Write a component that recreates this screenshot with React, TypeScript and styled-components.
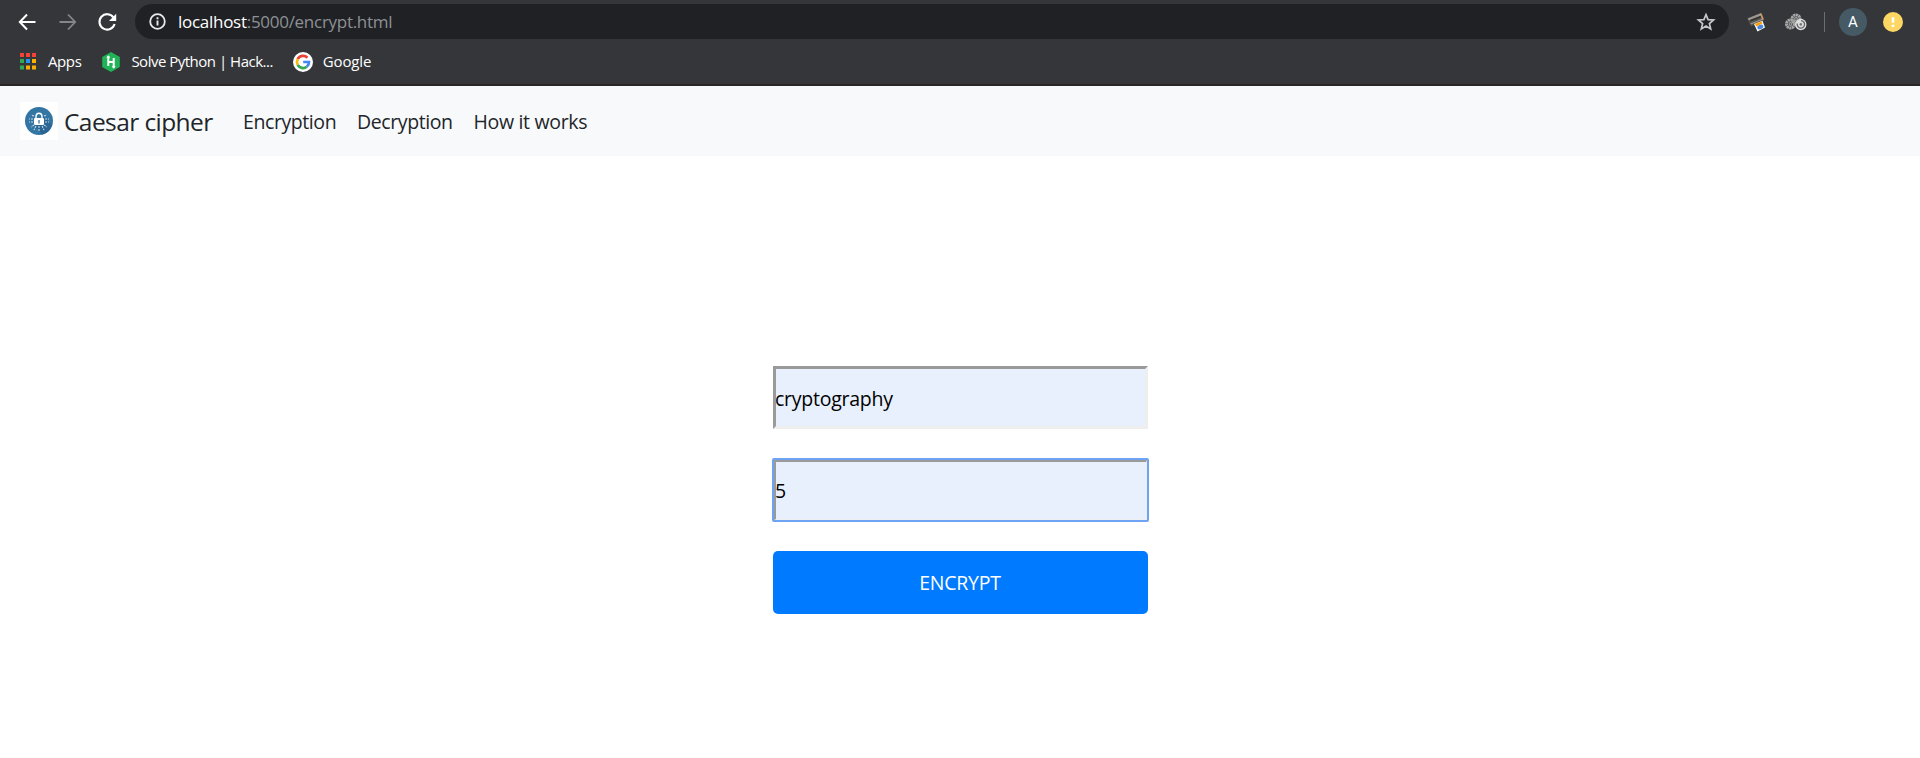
import React from 'react';
import styled, { createGlobalStyle } from 'styled-components';

const Global = createGlobalStyle`
  * { box-sizing: border-box; }
  html, body { margin: 0; background: #fff; overflow: hidden; }
  body { font-family: "Open Sans", "Noto Sans", sans-serif; color: #212529; }
`;

const Page = styled.div`
  display: flex;
  flex-direction: column;
  height: 758px;
`;

const Chrome = styled.header`
  height: 86px;
  background: #35363a;
  border-bottom: 2px solid #292827;
  color: #fff;
`;

const Toolbar = styled.div`
  display: flex;
  align-items: center;
  height: 43px;
  padding: 0 10px 0 17px;
`;

const NavIcon = styled.svg`
  width: 20px;
  height: 20px;
  margin-right: 20px;
  flex: none;
`;

const AddressBar = styled.div`
  display: flex;
  align-items: center;
  width: 1594px;
  height: 35px;
  margin-left: -2px;
  padding: 0 13px 0 14px;
  border-radius: 18px;
  background: #202124;
`;

const InfoIcon = styled.svg`
  width: 17px;
  height: 17px;
  margin-right: 12px;
`;

const Url = styled.div`
  flex: 1;
  font-size: 17px;
  line-height: 24px;
  letter-spacing: -0.28px;
  color: #8d9196;
  white-space: nowrap;
`;

const Host = styled.span`
  color: #fff;
`;

const StarIcon = styled.svg`
  width: 20px;
  height: 20px;
`;

const Extensions = styled.div`
  display: flex;
  align-items: center;
  margin-left: 18px;
`;

const ExtIcon = styled.svg<{ $w: number; $gap: number }>`
  width: ${(p) => p.$w}px;
  height: 20px;
  margin-right: ${(p) => p.$gap}px;
`;

const Divider = styled.div`
  width: 1px;
  height: 20px;
  margin-right: 14px;
  background: #6d6e71;
`;

const Avatar = styled.div`
  width: 28px;
  height: 28px;
  margin-right: 16px;
  border-radius: 50%;
  background: #455a64;
  font: 15px/28px Roboto, sans-serif;
  text-align: center;
`;

const Alert = styled.svg`
  width: 20px;
  height: 20px;
`;

const Bookmarks = styled.nav`
  display: flex;
  align-items: center;
  height: 37px;
  padding-left: 19px;
`;

const Bookmark = styled.div<{ $gap: number; $space: number; $track: number }>`
  display: flex;
  align-items: center;
  gap: ${(p) => p.$space}px;
  margin-right: ${(p) => p.$gap}px;
  font-size: 15px;
  line-height: 20px;
  letter-spacing: ${(p) => p.$track}px;
  white-space: nowrap;
`;

const BookmarkLabel = styled.span`
  padding-bottom: 2px;
`;

const SiteNav = styled.nav`
  display: flex;
  align-items: center;
  height: 70px;
  padding-left: 20px;
  background: #f8f9fb;
`;

const Logo = styled.svg`
  width: 38px;
  height: 38px;
  margin-right: 6px;
`;

const Brand = styled.a`
  width: 179px;
  font-size: 24.5px;
  line-height: 38px;
  letter-spacing: -0.58px;
  padding-top: 2px;
  white-space: nowrap;
`;

const NavLink = styled.a<{ $w: number; $track: number }>`
  width: ${(p) => p.$w}px;
  padding-top: 2px;
  font-size: 19.5px;
  line-height: 30px;
  letter-spacing: ${(p) => p.$track}px;
  white-space: nowrap;
`;

const Form = styled.form`
  display: flex;
  flex-direction: column;
  align-items: center;
  padding-top: 210px;
`;

const Field = styled.input`
  display: block;
  width: 375px;
  height: 63px;
  margin: 0 0 29px 1px;
  padding: 2px 0 0;
  border: 3px solid;
  border-color: #9a9a9a #eee #eee #9a9a9a;
  border-radius: 0;
  outline: none;
  background: #e8f0fe;
  color: #000;
  font: 19.5px "Open Sans", sans-serif;
  letter-spacing: -0.25px;
  text-indent: -1px;
`;

const FocusRing = styled.div`
  width: 377px;
  height: 64px;
  margin: 0 0 29px 1px;
  border: 2px solid #6ea2f3;
  border-radius: 2px;
`;

const FocusedField = styled(Field)`
  width: 373px;
  height: 60px;
  margin: 0;
  padding: 0;
  border-width: 2px 1px 1px 2px;
`;

const Submit = styled.button`
  width: 375px;
  height: 63px;
  margin-left: 1px;
  padding: 0 1px 0 0;
  border: 0;
  border-radius: 5px;
  background: #007bff;
  color: #fff;
  font: 19.5px "Open Sans", sans-serif;
  letter-spacing: -0.25px;
`;

const appColors = ['#f44336', '#f44336', '#f44336', '#34a853', '#2196f3', '#fbaf00', '#34a853', '#fbaf00', '#fbaf00'];

export default function App() {
  return (
    <Page>
      <Global />
      <Chrome>
        <Toolbar>
          <NavIcon viewBox="0 0 20 20" fill="none" stroke="#fff" strokeWidth="2">
            <path d="M18.5 10H3.5M10 2.5L2.8 10L10 17.5" />
          </NavIcon>
          <NavIcon viewBox="0 0 20 20" fill="none" stroke="#85868a" strokeWidth="1.8">
            <path d="M2.5 10H17.5M11 2.5L18.2 10L11 17.5" />
          </NavIcon>
          <NavIcon viewBox="0 0 20 20">
            <path d="M16.4 5.3A7.7 7.7 0 1 0 17.6 12" fill="none" stroke="#fff" strokeWidth="2.1" />
            <path d="M19.2 1.8V9H12Z" fill="#fff" />
          </NavIcon>
          <AddressBar>
            <InfoIcon viewBox="0 0 17 17">
              <circle cx="8.5" cy="8.5" r="7.3" fill="none" stroke="#e8eaed" strokeWidth="1.8" />
              <path d="M8.5 7.6V12.6M8.5 4.3V6.2" stroke="#e8eaed" strokeWidth="1.9" />
            </InfoIcon>
            <Url><Host>localhost</Host>:5000/encrypt.html</Url>
            <StarIcon viewBox="0 0 20 20" fill="none" stroke="#c6c7c9" strokeWidth="1.7">
              <path d="M10 2.6L12.1 7.6L17.6 8L13.4 11.6L14.7 17L10 14.1L5.3 17L6.6 11.6L2.4 8L7.9 7.6Z" />
            </StarIcon>
          </AddressBar>
          <Extensions>
            <ExtIcon $w={20} $gap={18} viewBox="0 0 20 20">
              <path d="M.5 6.5L14 1L17 8.5L4 14.5Z" fill="#55524f" />
              <path d="M.5 6.5L14 1L15 3.5L2 8.5Z" fill="#9c9790" />
              <path d="M3 8.8L14 4.6" stroke="#343230" strokeWidth="1.6" />
              <path d="M3.6 12L15.5 7.2" stroke="#a09a93" strokeWidth="1.2" />
              <path d="M13 2L14.6 1.4L17 7.2L15.2 8Z" fill="#c39766" />
              <path d="M7 12L15.5 8.8L18 15.5L10.5 19.5Z" fill="#fff" />
              <path d="M8 12L14.5 9.4L15.5 11.6L9.2 14.6Z" fill="#ffa000" />
              <ellipse cx="13.3" cy="15" rx="3.1" ry="2.1" transform="rotate(-22 13.3 15)" fill="#4d87df" />
            </ExtIcon>
            <ExtIcon $w={22} $gap={17} viewBox="0 0 22 20">
              <g fill="none" stroke="#a6a6a6">
                <circle cx="5.5" cy="12" r="4" strokeWidth="3" strokeDasharray="2.2 .4" />
                <circle cx="5.5" cy="12" r="1.4" strokeWidth="1.2" />
                <circle cx="11" cy="7" r="4" strokeWidth="3" strokeDasharray="2.2 .4" />
                <circle cx="11" cy="7" r="1.4" strokeWidth="1.2" />
              </g>
              <circle cx="15.8" cy="12.5" r="5.7" fill="#dedede" />
              <path d="M12.3 11.5A3.7 3.7 0 1 0 16 8.7" fill="none" stroke="#666" strokeWidth="1.3" />
              <circle cx="15.8" cy="12.4" r="1.3" fill="#777" />
            </ExtIcon>
            <Divider />
            <Avatar>A</Avatar>
            <Alert viewBox="0 0 20 20">
              <circle cx="10" cy="10" r="10" fill="#fdd663" />
              <path d="M10 5.2V10.8M10 12.7V15" stroke="#fff" strokeWidth="2.6" />
            </Alert>
          </Extensions>
        </Toolbar>
        <Bookmarks>
          <Bookmark $gap={20} $space={11} $track={-0.4}>
            <svg width="18" height="18" viewBox="0 0 18 18">
              {appColors.map((c, i) => (
                <rect key={i} x={1 + (i % 3) * 6} y={(i > 5 ? 0.5 : 0) + Math.floor(i / 3) * 6} width="4" height="4" fill={c} />
              ))}
            </svg>
            <BookmarkLabel>Apps</BookmarkLabel>
          </Bookmark>
          <Bookmark $gap={20} $space={10} $track={-0.5}>
            <svg width="20" height="20" viewBox="0 0 20 20">
              <path d="M10 0L18.8 5V15L10 20L1.2 15V5Z" fill="#1fb455" />
              <path d="M7.3 4V14M12.7 6V16M7.3 10H12.7" stroke="#fff" strokeWidth="2" />
              <path d="M5.3 5.8L7.3 3.2L9.3 5.8ZM10.7 14.2L12.7 16.8L14.7 14.2Z" fill="#fff" />
            </svg>
            <BookmarkLabel>Solve Python | Hack...</BookmarkLabel>
          </Bookmark>
          <Bookmark $gap={0} $space={10} $track={-0.15}>
            <svg width="20" height="20" viewBox="0 0 20 20">
              <circle cx="10" cy="10" r="10" fill="#fff" />
              <g fill="none" strokeWidth="2.7">
                <path d="M14.4 5.7A6 6 0 0 0 4.7 7.2" stroke="#ea4335" />
                <path d="M4.7 7.2A6 6 0 0 0 4.7 12.8" stroke="#fbbc05" />
                <path d="M4.7 12.8A6 6 0 0 0 13.8 14.7" stroke="#34a853" />
                <path d="M13.8 14.7A6 6 0 0 0 16 10H10.2" stroke="#4285f4" />
              </g>
            </svg>
            <BookmarkLabel>Google</BookmarkLabel>
          </Bookmark>
        </Bookmarks>
      </Chrome>
      <SiteNav>
        <Logo viewBox="0 0 38 38">
          <rect width="38" height="38" fill="#fff" />
          <circle cx="19" cy="19" r="14" fill="#3375a3" />
          <path d="M23 14L32 23A14 14 0 0 1 22 32.7L15 23Z" fill="#2a6594" />
          <g fill="none" stroke="#c9dce8" strokeWidth="1.1" strokeDasharray="2 1">
            <path d="M14 14L11 13M13 17H9M13 20H9M14 23L11 25M16 24L14 28M19 24V30M22 24L24 28M24 23L27 25M25 20H29M25 17H29M24 14L27 13" />
          </g>
          <path d="M16 17V14.5A3 3.2 0 0 1 22 14.5V17" fill="none" stroke="#fff" strokeWidth="1.4" />
          <rect x="14" y="16" width="10" height="7" rx="1" fill="#fff" />
          <path d="M19 18V21.5" stroke="#3375a3" strokeWidth="1.3" />
        </Logo>
        <Brand>Caesar cipher</Brand>
        <NavLink $w={114} $track={-0.42}>Encryption</NavLink>
        <NavLink $w={116.5} $track={-0.4}>Decryption</NavLink>
        <NavLink $w={120} $track={-0.32}>How it works</NavLink>
      </SiteNav>
      <Form onSubmit={(e) => e.preventDefault()}>
        <Field type="text" defaultValue="cryptography" />
        <FocusRing>
          <FocusedField type="text" defaultValue="5" />
        </FocusRing>
        <Submit type="submit">ENCRYPT</Submit>
      </Form>
    </Page>
  );
}
